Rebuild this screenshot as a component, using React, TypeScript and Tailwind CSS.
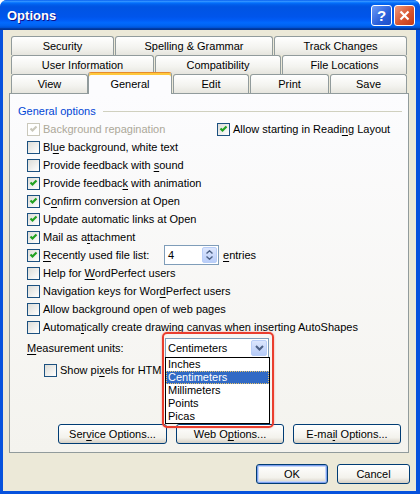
import React from 'react';

// Access-key letter
const U = ({ children }: { children: React.ReactNode }) => (
  <span className="underline underline-offset-[2px]">{children}</span>
);

const CheckBox = ({ checked, disabled }: { checked?: boolean; disabled?: boolean }) => (
  <span
    className={`relative inline-block w-[13px] h-[13px] shrink-0 border ${
      disabled
        ? 'border-[#CAC8BB] bg-white'
        : 'border-[#1C5180] bg-[linear-gradient(135deg,#DCDCD7,#FFFFFF)]'
    }`}
  >
    {checked && (
      <svg className="absolute left-0 top-0" width="11" height="11" viewBox="0 0 11 11">
        <path
          d="M2.5 4.5 L4.5 6.5 L8.5 2.5"
          fill="none"
          stroke={disabled ? '#CAC8BB' : '#21A121'}
          strokeWidth="2.2"
        />
      </svg>
    )}
  </span>
);

const Option = ({
  checked,
  disabled,
  children,
}: {
  checked?: boolean;
  disabled?: boolean;
  children: React.ReactNode;
}) => (
  <div className="flex h-[18px] items-center gap-[3px]">
    <CheckBox checked={checked} disabled={disabled} />
    <span className={`whitespace-nowrap ${disabled ? 'text-[#ACA899]' : ''}`}>{children}</span>
  </div>
);

const Tab = ({ w, label }: { w: string; label: string }) => (
  <div
    className={`${w} h-[19px] flex items-center justify-center rounded-t-[3px] border border-b-0 border-[#919B9C] bg-[linear-gradient(to_bottom,#FFFFFF,#F3F3EF_60%,#E6E5DE)]`}
  >
    {label}
  </div>
);

const XpButton = ({
  w,
  def,
  children,
}: {
  w: string;
  def?: boolean;
  children: React.ReactNode;
}) => (
  <div
    className={`${w} h-[20px] flex items-center justify-center rounded-[3px] border border-[#003C74] bg-[linear-gradient(to_bottom,#FFFFFF,#F3F2EC_70%,#D6D0C5)] ${
      def ? 'shadow-[inset_0_0_0_1px_#7FA0EE,inset_0_0_0_2px_#C5D7F8]' : ''
    }`}
  >
    {children}
  </div>
);

const units = ['Inches', 'Centimeters', 'Millimeters', 'Points', 'Picas'];

export default function App() {
  return (
    <div className="w-[420px] h-[494px] flex flex-col rounded-t-[7px] overflow-hidden bg-[#0752DD] text-[11px] leading-[14px] text-black font-['Liberation_Sans',Arial,sans-serif]">
      {/* title bar */}
      <div className="h-[30px] shrink-0 flex items-center justify-between pl-[7px] pr-[5px] bg-[linear-gradient(to_bottom,#0058EE_0%,#3593FF_4%,#288EFF_6%,#127DFF_8%,#036FFC_10%,#0262EE_14%,#0057E5_20%,#0054E3_24%,#0055EB_56%,#005BF5_66%,#026AFE_76%,#0062EF_86%,#0052D6_92%,#0040AB_94%,#003092_100%)]">
        <span className="text-white font-bold text-[13px] pt-px [text-shadow:1px_1px_#0F1089]">Options</span>
        <div className="flex gap-[2px] pt-[1px]">
          <div className="w-[21px] h-[21px] rounded-[3px] border border-white flex items-center justify-center bg-[linear-gradient(135deg,#6E9CF7,#2A5FDA_60%,#1E4FC9)] text-white font-bold text-[15px] leading-none">
            ?
          </div>
          <div className="w-[21px] h-[21px] rounded-[3px] border border-white flex items-center justify-center bg-[linear-gradient(135deg,#EE9A7E,#D8552F_55%,#C23A17)]">
            <svg width="11" height="11" viewBox="0 0 11 11">
              <path d="M1.5 1.5 L9.5 9.5 M9.5 1.5 L1.5 9.5" stroke="#FFFFFF" strokeWidth="2.2" />
            </svg>
          </div>
        </div>
      </div>

      {/* window client */}
      <div className="flex-1 pl-[3px] pr-[4px] pb-[3px]">
        <div className="h-full bg-[#ECE9D8] flex flex-col pt-[6px]">
          {/* tab rows */}
          <div className="ml-[8px] flex gap-px">
            <Tab w="w-[103px]" label="Security" />
            <Tab w="w-[158px]" label="Spelling & Grammar" />
            <Tab w="w-[133px]" label="Track Changes" />
          </div>
          <div className="ml-[8px] flex gap-px">
            <Tab w="w-[143px]" label="User Information" />
            <Tab w="w-[126px]" label="Compatibility" />
            <Tab w="w-[125px]" label="File Locations" />
          </div>
          <div className="ml-[8px] h-[19px] flex items-end">
            <Tab w="w-[77px]" label="View" />
            <div className="relative z-10 w-[84px] h-[22px] -mb-px flex items-center justify-center rounded-t-[3px] border border-b-0 border-[#919B9C] border-t-[#E68B2C] bg-[#FCFCFE] shadow-[inset_0_2px_0_#FFC83C]">
              General
            </div>
            <div className="flex gap-px ml-px">
              <Tab w="w-[76px]" label="Edit" />
              <Tab w="w-[79px]" label="Print" />
              <Tab w="w-[77px]" label="Save" />
            </div>
          </div>

          {/* tab page */}
          <div className="ml-[6px] w-[400px] h-[360px] flex flex-col border border-[#919B9C] bg-[linear-gradient(to_bottom,#FCFCFE,#F4F3EE)] pl-[8px] pr-[6px] pt-[10px] pb-[8px]">
            <div className="flex items-center h-[14px]">
              <span className="text-[#0046D5]">General options</span>
              <div className="flex-1 h-px ml-[7px] bg-[#D0D0BF]" />
            </div>

            <div className="pl-[9px] mt-[2px]">
              <div className="flex">
                <div className="w-[190px]">
                  <Option checked disabled>
                    Background repagination
                  </Option>
                </div>
                <Option checked>
                  Allow starting in Readi<U>n</U>g Layout
                </Option>
              </div>
              <Option>
                Bl<U>u</U>e background, white text
              </Option>
              <Option>
                Provide feedback with <U>s</U>ound
              </Option>
              <Option checked>
                Provide feedbac<U>k</U> with animation
              </Option>
              <Option checked>
                C<U>o</U>nfirm conversion at Open
              </Option>
              <Option checked>Update automatic links at Open</Option>
              <Option checked>
                Mail as a<U>t</U>tachment
              </Option>
              <div className="flex h-[18px] items-center">
                <CheckBox checked />
                <span className="ml-[3px] w-[121px] whitespace-nowrap">
                  <U>R</U>ecently used file list:
                </span>
                <div className="w-[55px] h-[20px] flex border border-[#7F9DB9] bg-white">
                  <span className="flex-1 pl-[3px] leading-[18px]">4</span>
                  <div className="w-[15px] my-px mr-px rounded-[2px] border border-[#B9CEF8] bg-[linear-gradient(to_bottom,#DCE6FD,#BACEF9)] flex flex-col items-center justify-center gap-[2px]">
                    <svg width="7" height="4" viewBox="0 0 7 4">
                      <path d="M0.5 3.5 L3.5 0.8 L6.5 3.5" fill="none" stroke="#4D6185" strokeWidth="1.4" />
                    </svg>
                    <svg width="7" height="4" viewBox="0 0 7 4">
                      <path d="M0.5 0.5 L3.5 3.2 L6.5 0.5" fill="none" stroke="#4D6185" strokeWidth="1.4" />
                    </svg>
                  </div>
                </div>
                <span className="ml-[4px]">
                  <U>e</U>ntries
                </span>
              </div>
              <Option>
                Help for <U>W</U>ordPerfect users
              </Option>
              <Option>
                Navigation keys for Wor<U>d</U>Perfect users
              </Option>
              <Option>Allow background open of web pages</Option>
              <Option>
                Automa<U>t</U>ically create drawing canvas when inserting AutoShapes
              </Option>

              {/* measurement units with open drop-down */}
              <div className="flex h-[20px] items-center mt-[2px]">
                <span className="w-[138px]">
                  <U>M</U>easurement units:
                </span>
                <div className="relative w-[104px] h-[20px]">
                  <div className="h-full flex border border-[#7F9DB9] bg-white">
                    <span className="flex-1 pl-[2px] leading-[18px]">Centimeters</span>
                    <div className="w-[16px] my-px mr-px rounded-[2px] border border-[#B9CEF8] bg-[linear-gradient(to_bottom,#DCE6FD,#B6CBF8)] flex items-center justify-center">
                      <svg width="9" height="6" viewBox="0 0 9 6">
                        <path d="M1 1 L4.5 4.5 L8 1" fill="none" stroke="#4D6185" strokeWidth="2" />
                      </svg>
                    </div>
                  </div>
                  <div className="absolute left-0 top-[19px] z-20 w-[105px] border border-black bg-white">
                    {units.map((u) =>
                      u === 'Centimeters' ? (
                        <div
                          key={u}
                          className="h-[13px] leading-[11px] pl-px bg-[#316AC5] text-white border border-dotted border-[#E8C36A]"
                        >
                          {u}
                        </div>
                      ) : (
                        <div key={u} className="h-[13px] leading-[13px] pl-[2px]">
                          {u}
                        </div>
                      )
                    )}
                  </div>
                  <div className="absolute -left-[3px] -top-[6px] z-30 w-[112px] h-[96px] rounded-[5px] border-2 border-[#EA3E2E] shadow-[0_0_2px_rgba(234,62,46,0.5)] pointer-events-none" />
                </div>
              </div>
              <div className="pl-[17px] mt-[3px]">
                <div className="flex h-[18px] items-center gap-[3px]">
                  <CheckBox />
                  {/* the open list covers the end of this label */}
                  <span className="w-[103px] overflow-hidden whitespace-nowrap">
                    Show pi<U>x</U>els for HTML features
                  </span>
                </div>
              </div>
            </div>

            <div className="mt-auto flex justify-end gap-[9px] pr-px">
              <XpButton w="w-[109px]">
                Ser<U>v</U>ice Options...
              </XpButton>
              <XpButton w="w-[108px]">
                Web O<U>p</U>tions...
              </XpButton>
              <XpButton w="w-[108px]">
                E-ma<U>i</U>l Options...
              </XpButton>
            </div>
          </div>

          <div className="mt-[11px] flex justify-end gap-[9px] pr-[6px]">
            <XpButton w="w-[72px]" def>
              OK
            </XpButton>
            <XpButton w="w-[73px]">Cancel</XpButton>
          </div>
        </div>
      </div>
    </div>
  );
}
